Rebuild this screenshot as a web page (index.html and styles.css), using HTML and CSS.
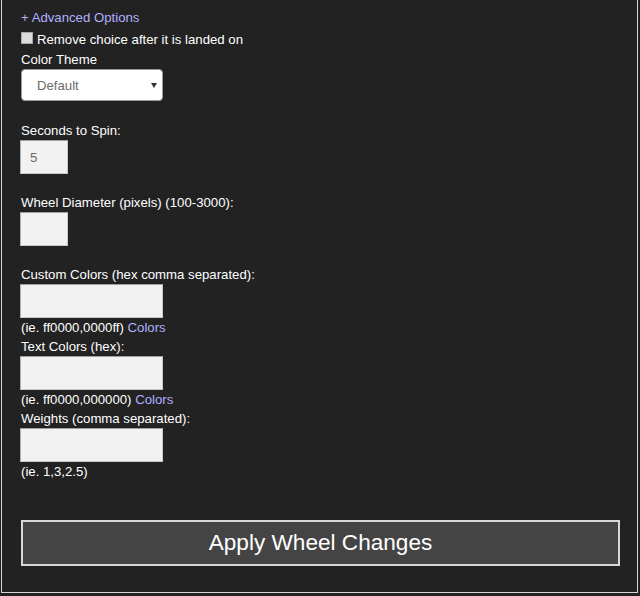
FILE: index.html
```html
<!DOCTYPE html>
<html>
<head>
<meta charset="utf-8">
<link rel="stylesheet" href="styles.css">
</head>
<body>
<div class="panel">
  <a class="adv" href="#">+ Advanced Options</a>
  <label class="check-row"><input type="checkbox" class="check"><span>Remove choice after it is landed on</span></label>
  <div class="label color-label">Color Theme</div>
  <div class="select-wrap">
    <select class="select"><option>Default</option></select>
  </div>
  <div class="label gap-20">Seconds to Spin:</div>
  <input class="field small" type="text" value="5">
  <div class="label gap-19">Wheel Diameter (pixels) (100-3000):</div>
  <input class="field small" type="text" value="">
  <div class="label gap-19">Custom Colors (hex comma separated):</div>
  <input class="field wide" type="text" value="">
  <div class="hint">(ie. ff0000,0000ff) <a href="#" class="link">Colors</a></div>
  <div class="label">Text Colors (hex):</div>
  <input class="field wide" type="text" value="">
  <div class="hint">(ie. ff0000,000000) <a href="#" class="link">Colors</a></div>
  <div class="label">Weights (comma separated):</div>
  <input class="field wide" type="text" value="">
  <div class="hint">(ie. 1,3,2.5)</div>
  <button class="apply" type="button">Apply Wheel Changes</button>
</div>
</body>
</html>
```
FILE: styles.css
```css
html, body {
  margin: 0;
  padding: 0;
  background: #222222;
}
body {
  font-family: "Liberation Sans", Arial, sans-serif;
  font-size: 13.2px;
  line-height: 19px;
  color: #ffffff;
  height: 596px;
  overflow: hidden;
}
.panel {
  margin: 0 2px 2px 1px;
  border: 1px solid #d6d6d6;
  border-top: none;
  padding: 8px 17px 26px 18px;
  display: flex;
  flex-direction: column;
  align-items: flex-start;
  background: #222222;
}
.adv {
  display: block;
  height: 19px;
  color: #b0b0ff;
  text-decoration: none;
  padding-left: 1px;
}
.check-row {
  display: flex;
  align-items: flex-start;
  margin-top: 3px;
  height: 19px;
}
.check {
  appearance: none;
  -webkit-appearance: none;
  width: 12px;
  height: 12px;
  margin: 2px 4px 0 1px;
  background: #dcdcdc;
  border: 1px solid #a8a8a8;
  box-sizing: border-box;
}
.label {
  height: 19px;
  padding-left: 1px;
}
.color-label {
  margin-top: 1px;
}
.gap-20 { margin-top: 20px; }
.gap-19 { margin-top: 19px; }
.select-wrap {
  position: relative;
  margin-left: 1px;
  width: 142px;
  height: 32px;
}
.select {
  appearance: none;
  -webkit-appearance: none;
  width: 142px;
  height: 32px;
  box-sizing: border-box;
  margin: 0;
  border: 1px solid #9a9a9a;
  border-radius: 4px;
  background: #ffffff;
  color: #6b6b6b;
  font-family: "Liberation Sans", Arial, sans-serif;
  font-size: 13.2px;
  padding: 0 0 0 15px;
}
.select-wrap::after {
  content: "";
  position: absolute;
  left: 130px;
  top: 14px;
  border-left: 3px solid transparent;
  border-right: 3px solid transparent;
  border-top: 5px solid #333333;
}
.field {
  display: block;
  box-sizing: border-box;
  height: 34px;
  margin: 0;
  background: #f2f2f2;
  border: 1px solid #c8c8c8;
  border-top-color: #9e9e9e;
  border-left-color: #b0b0b0;
  font-family: "Liberation Sans", Arial, sans-serif;
  font-size: 13.2px;
  color: #6a6a6a;
  padding: 0 0 0 9px;
}
.small { width: 48px; }
.wide { width: 143px; }
.hint {
  height: 19px;
  padding-left: 1px;
}
.link {
  color: #b0b0ff;
  text-decoration: none;
}
.apply {
  margin: 39px 0 0 1px;
  width: 599px;
  height: 46px;
  box-sizing: border-box;
  background: #444444;
  border: 2px solid #d8d8d8;
  color: #ffffff;
  font-family: "Liberation Sans", Arial, sans-serif;
  font-size: 22.6px;
  padding: 0;
}
```
